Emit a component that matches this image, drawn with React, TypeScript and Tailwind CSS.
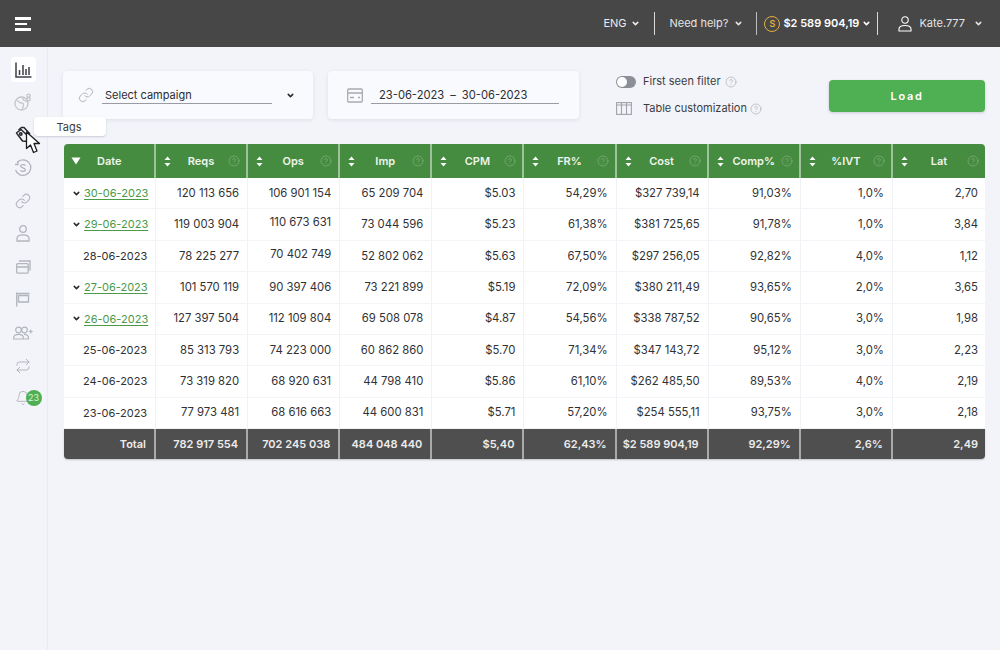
import React from "react";
import { ChevronDown, CircleHelp, Link, Repeat, Bell } from "lucide-react";

const font = { fontFamily: "Inter, 'Noto Sans', sans-serif" };

const columns = ["Reqs", "Ops", "Imp", "CPM", "FR%", "Cost", "Comp%", "%IVT", "Lat"];

const rows = [
  { date: "30-06-2023", open: true, cells: ["120 113 656", "106 901 154", "65 209 704", "$5.03", "54,29%", "$327 739,14", "91,03%", "1,0%", "2,70"] },
  { date: "29-06-2023", open: true, cells: ["119 003 904", "110 673 631", "73 044 596", "$5.23", "61,38%", "$381 725,65", "91,78%", "1,0%", "3,84"] },
  { date: "28-06-2023", open: false, cells: ["78 225 277", "70 402 749", "52 802 062", "$5.63", "67,50%", "$297 256,05", "92,82%", "4,0%", "1,12"] },
  { date: "27-06-2023", open: true, cells: ["101 570 119", "90 397 406", "73 221 899", "$5.19", "72,09%", "$380 211,49", "93,65%", "2,0%", "3,65"] },
  { date: "26-06-2023", open: true, cells: ["127 397 504", "112 109 804", "69 508 078", "$4.87", "54,56%", "$338 787,52", "90,65%", "3,0%", "1,98"] },
  { date: "25-06-2023", open: false, cells: ["85 313 793", "74 223 000", "60 862 860", "$5.70", "71,34%", "$347 143,72", "95,12%", "3,0%", "2,23"] },
  { date: "24-06-2023", open: false, cells: ["73 319 820", "68 920 631", "44 798 410", "$5.86", "61,10%", "$262 485,50", "89,53%", "4,0%", "2,19"] },
  { date: "23-06-2023", open: false, cells: ["77 973 481", "68 616 663", "44 600 831", "$5.71", "57,20%", "$254 555,11", "93,75%", "3,0%", "2,18"] },
];

const totals = ["782 917 554", "702 245 038", "484 048 440", "$5,40", "62,43%", "$2 589 904,19", "92,29%", "2,6%", "2,49"];

const gridCols = "grid grid-cols-[92px_repeat(9,1fr)]";

function Caret({ className = "" }: { className?: string }) {
  return <ChevronDown className={`w-[9px] h-[9px] shrink-0 ${className}`} strokeWidth={4} />;
}

function SortIcon() {
  return (
    <svg width="7" height="11" viewBox="0 0 7 11" className="shrink-0">
      <path d="M3.5 0.5 L6.5 4 H0.5 Z M3.5 10.5 L0.5 7 H6.5 Z" fill="#ffffff" />
    </svg>
  );
}

function NavIcon({ children, active }: { children: React.ReactNode; active?: boolean }) {
  return (
    <div className={`w-[25px] h-[25px] flex items-center justify-center rounded ${active ? "bg-white" : ""}`}>
      {children}
    </div>
  );
}

function Sidebar() {
  const stroke = "#b2b5bb";
  return (
    <aside className="w-[48px] shrink-0 border-r border-[#e9ebf0] flex flex-col items-center pt-[10px] pr-[1px] gap-[7.9px]">
      <NavIcon active>
        <svg width="17" height="16" viewBox="0 0 17 16" fill="none" stroke="#3d3f45" strokeWidth="1.5">
          <path d="M1 0.5 V15 H16.5" />
          <path d="M4.5 8 V13 M8 3 V13 M11 7 V13 M14 5 V13" />
        </svg>
      </NavIcon>
      <NavIcon>
        <svg width="18" height="18" viewBox="0 0 18 18" fill="none" stroke="#c3c5ca" strokeWidth="1.3">
          <circle cx="7.5" cy="10.5" r="6.5" />
          <path d="M2 7 C5 8 5 10 8 10 C10 10 10 13 8 16.5 M9 4.5 C8 7 11 8 13.5 8.5" />
          <circle cx="14.5" cy="2.8" r="1.7" />
          <circle cx="14.5" cy="6.2" r="1.7" />
        </svg>
      </NavIcon>
      <NavIcon>
        <span className="w-[17px] h-[19px]" />
      </NavIcon>
      <NavIcon>
        <svg width="18" height="18" viewBox="0 0 18 18" fill="none" stroke={stroke} strokeWidth="1.3">
          <path d="M3 3.5 A7.8 7.8 0 1 1 1.5 11" />
          <path d="M11.5 6.5 C10.5 5.5 7 5.2 6.7 7.2 C6.5 9.2 11.6 8.6 11.4 10.9 C11.2 12.8 7.7 12.7 6.4 11.5" />
          <path d="M1 5.5 H4 V2.5" />
        </svg>
      </NavIcon>
      <NavIcon>
        <Link size={16} color={stroke} strokeWidth={1.6} />
      </NavIcon>
      <NavIcon>
        <svg width="14" height="17" viewBox="0 0 14 17" fill="none" stroke={stroke} strokeWidth="1.3">
          <circle cx="7" cy="4" r="3.3" />
          <path d="M1 16 V13.5 C1 11 3 9.8 7 9.8 C11 9.8 13 11 13 13.5 V16 Z" />
        </svg>
      </NavIcon>
      <NavIcon>
        <svg width="15" height="14" viewBox="0 0 15 14" fill="none" stroke={stroke} strokeWidth="1.3">
          <rect x="0.7" y="3.7" width="11.5" height="9.5" rx="1" />
          <path d="M3 1 H14 V10.5 M0.7 7 H12" />
        </svg>
      </NavIcon>
      <NavIcon>
        <svg width="14" height="15" viewBox="0 0 14 15" fill="none" stroke={stroke} strokeWidth="1.3">
          <path d="M0.7 0.5 V14.5 M0.7 1.5 H13.5 M2.5 3.5 H12.5 V10 H2.5 Z" />
        </svg>
      </NavIcon>
      <NavIcon>
        <svg width="20" height="14" viewBox="0 0 20 14" fill="none" stroke={stroke} strokeWidth="1.2">
          <circle cx="5.5" cy="4" r="2.8" />
          <path d="M0.7 13 V11.5 C0.7 9.5 2.5 8.3 5.5 8.3 C8.5 8.3 10.3 9.5 10.3 11.5 V13 Z" />
          <circle cx="11.5" cy="4" r="2.8" />
          <path d="M11 13 H15.5 V11.5 C15.5 9.5 13.8 8.3 11 8.3" />
          <path d="M17.7 3.5 V7.5 M15.7 5.5 H19.7" />
        </svg>
      </NavIcon>
      <NavIcon>
        <Repeat size={16} color={stroke} strokeWidth={1.5} />
      </NavIcon>
      <div className="relative">
        <NavIcon>
          <Bell size={16} color={stroke} strokeWidth={1.4} />
        </NavIcon>
        <div className="absolute left-[15px] top-[4px] w-[16px] h-[16px] rounded-full bg-[#4fb053] flex items-center justify-center text-[9px] text-[#dff3df]">
          23
        </div>
      </div>
    </aside>
  );
}

function Header() {
  return (
    <header className="h-[47px] shrink-0 bg-[#474747] flex items-center text-white text-[11px] pl-[15px]">
      <div className="flex flex-col gap-[3px] w-[16px]">
        <span className="h-[3px] w-[16px] bg-white" />
        <span className="h-[2px] w-[12px] bg-white" />
        <span className="h-[3px] w-[16px] bg-white" />
      </div>
      <div className="ml-auto flex items-center h-full">
        <div className="flex items-center gap-[4px] text-[#ececec]">
          ENG <Caret />
        </div>
        <div className="w-px h-[23px] bg-[#d8d8d8] ml-[14px]" />
        <div className="flex items-center gap-[6px] ml-[15px] text-[#e4e4e4]">
          Need help? <Caret />
        </div>
        <div className="w-px h-[23px] bg-[#bdbdbd] ml-[13px]" />
        <div className="flex items-center ml-[7px] font-semibold">
          <span className="w-[16px] h-[16px] rounded-full border-[1.5px] border-[#e9ad3c] text-[#e9ad3c] text-[9px] flex items-center justify-center">
            S
          </span>
          <span className="ml-[3px]">$2 589 904,19</span>
          <Caret className="ml-[3px]" />
        </div>
        <div className="w-px h-[23px] bg-[#d8d8d8] ml-[6px]" />
        <div className="flex items-center ml-[20px] text-[#e4e4e4]">
          <svg width="14" height="16" viewBox="0 0 14 16" fill="none" stroke="#ffffff" strokeWidth="1.1">
            <circle cx="7" cy="4" r="3.2" />
            <path d="M1 15 V13 C1 10.8 3 9.5 7 9.5 C11 9.5 13 10.8 13 13 V15 Z" />
          </svg>
          <span className="ml-[7px]">Kate.777</span>
          <Caret className="ml-[9px]" />
        </div>
        <div className="w-[17px]" />
      </div>
    </header>
  );
}

function Controls() {
  return (
    <div className="flex items-start h-[48px]">
      <div className="w-[250px] h-[48px] bg-[#f9fafd] rounded shadow-[0_1px_4px_rgba(40,50,80,0.1)] flex items-center pl-[15px]">
        <Link size={16} color="#b2b5bb" strokeWidth={1.5} />
        <div className="ml-[8px] w-[170px] h-[18px] border-b border-[#9a9ca3] pl-[3px] text-[11px] text-[#2b2d31] leading-[18px]">
          Select campaign
        </div>
        <Caret className="ml-[14px] text-[#26282c]" />
      </div>
      <div className="ml-[15px] w-[251px] h-[48px] bg-[#f9fafd] rounded shadow-[0_1px_4px_rgba(40,50,80,0.1)] flex items-center pl-[19px]">
        <svg width="16" height="15" viewBox="0 0 16 15" fill="none" stroke="#a8abb1" strokeWidth="1.3">
          <rect x="0.7" y="1" width="14.6" height="13" rx="1" />
          <path d="M0.7 5 H15.3 M3 9.5 H7 M11 9.5 H13" />
        </svg>
        <div className="ml-[8px] w-[188px] h-[18px] border-b border-[#9a9ca3] pl-[8px] text-[11.2px] text-[#2b2d31] leading-[18px] flex gap-[6px]">
          <span>23-06-2023</span>
          <span>–</span>
          <span>30-06-2023</span>
        </div>
      </div>
      <div className="ml-[37px] pt-[3px] flex flex-col gap-[12px] text-[11px] text-[#3b3d42]">
        <div className="flex items-center h-[15px]">
          <div className="w-[20px] h-[12px] rounded-full bg-[#8d8f96] flex items-center pl-[1px]">
            <span className="w-[10px] h-[10px] rounded-full bg-white" />
          </div>
          <span className="ml-[7px]">First seen filter</span>
          <CircleHelp size={12} color="#a8aab0" strokeWidth={1.3} className="ml-[4px]" />
        </div>
        <div className="flex items-center h-[15px]">
          <svg width="16" height="13" viewBox="0 0 16 13" fill="none" stroke="#a0a3a9" strokeWidth="1.1">
            <rect x="0.6" y="0.6" width="14.8" height="11.8" />
            <path d="M5.5 0.6 V12.4 M10.5 0.6 V12.4 M0.6 3 H15.4" />
          </svg>
          <span className="ml-[11px]">Table customization</span>
          <CircleHelp size={12} color="#a8aab0" strokeWidth={1.3} className="ml-[3px]" />
        </div>
      </div>
      <button className="ml-auto mt-[9px] w-[156px] h-[32px] rounded bg-[#4fb053] shadow-[0_1px_3px_rgba(40,50,80,0.2)] text-white text-[11px] font-semibold tracking-[0.15em]">
        Load
      </button>
    </div>
  );
}

function DataTable() {
  return (
    <div className="mt-[25px] ml-[1px] text-[11.3px] text-[#2f3135]">
      <div className={`${gridCols} h-[34px] bg-[#458b40] rounded-t text-[#eef5ec] font-semibold text-[11px]`}>
        <div className="flex items-center pl-[7px] border-r-2 border-[#9ec29a]">
          <svg width="10" height="8" viewBox="0 0 10 8">
            <path d="M0.5 0.5 H9.5 L5 7.5 Z" fill="#ffffff" />
          </svg>
          <span className="ml-[16px]">Date</span>
        </div>
        {columns.map((c, i) => (
          <div
            key={c}
            className={`flex items-center pl-[8px] pr-[6px] ${i < 8 ? "border-r-2 border-[#9ec29a]" : ""}`}
          >
            <SortIcon />
            <span className="flex-1 text-center pl-[3px]">{c}</span>
            <CircleHelp size={12} color="#86b382" strokeWidth={1.3} className="shrink-0" />
          </div>
        ))}
      </div>
      <div className="bg-white">
        {rows.map((r) => (
          <div key={r.date} className={`${gridCols} h-[31.4px] border-b border-[#f3f4f7] items-center`}>
            <div className="flex items-center h-full border-r border-[#f1f2f5] pl-[8px] text-[11px]">
              {r.open ? <Caret className="w-[8px] h-[8px] text-[#26282c]" /> : <span className="w-[8px]" />}
              {r.open ? (
                <span className="ml-[3px] text-[#4a9a48] underline underline-offset-2 decoration-[#4a9a48]">{r.date}</span>
              ) : (
                <span className="ml-[3px]">{r.date}</span>
              )}
            </div>
            {r.cells.map((c, i) => (
              <div
                key={i}
                className={`flex items-center justify-end h-full ${i < 8 ? "pr-[8px] border-r border-[#f1f2f5]" : "pr-[7px]"}`}
              >
                {/* ops column sits a little higher on these two rows */}
                <span className={i === 1 && (r.date === "29-06-2023" || r.date === "28-06-2023") ? "-translate-y-[2px]" : ""}>
                  {c}
                </span>
              </div>
            ))}
          </div>
        ))}
      </div>
      <div className={`${gridCols} h-[30px] bg-[#4f4f4f] rounded-b text-[#ececec] font-semibold text-[11px] shadow-[0_1px_2px_rgba(0,0,0,0.2)]`}>
        <div className="flex items-center justify-end pr-[8px] border-r-2 border-[#a9a9a9]">Total</div>
        {totals.map((t, i) => (
          <div
            key={t}
            className={`flex items-center justify-end ${i < 8 ? "pr-[8px] border-r-2 border-[#a9a9a9]" : "pr-[7px]"}`}
          >
            {t}
          </div>
        ))}
      </div>
    </div>
  );
}

export default function App() {
  return (
    <div style={font} className="relative w-[1000px] h-[650px] overflow-hidden bg-[#f2f4f9] flex flex-col">
      <Header />
      <div className="flex flex-1 min-h-0">
        <Sidebar />
        <main className="flex-1 pl-[15px] pr-[15px] pt-[24px]">
          <Controls />
          <DataTable />
        </main>
      </div>
      {/* hover tooltip + mouse pointer over the Tags item */}
      <div className="absolute left-[34px] top-[117px] w-[72px] h-[19px] bg-white rounded-sm shadow-[0_1px_2px_rgba(40,50,80,0.2)] text-[11px] text-[#3b3d42] flex items-center justify-center pr-[2px] pt-[1px]">
        Tags
      </div>
      <svg width="17" height="19" viewBox="0 0 17 19" fill="none" stroke="#26282c" strokeWidth="1.5" className="absolute left-[15px] top-[126px]">
        <path d="M1.5 7 L6 3.5 L13 10 L12.5 15.5 L7.5 15 Z" strokeLinejoin="round" />
        <circle cx="5.8" cy="8" r="1.2" />
        <path d="M3.5 4 L6.5 1.5 L9 1.5 L15 8" />
      </svg>
      <svg width="17" height="24" viewBox="0 0 17 24" className="absolute left-[25px] top-[131px]">
        <path
          d="M1.5 1 L1.5 17.5 L5.5 14 L8.5 21.5 L12 20 L9 12.5 L14.5 12.5 Z"
          fill="#ffffff"
          stroke="#1d1d1f"
          strokeWidth="1.3"
          strokeLinejoin="round"
        />
      </svg>
    </div>
  );
}
